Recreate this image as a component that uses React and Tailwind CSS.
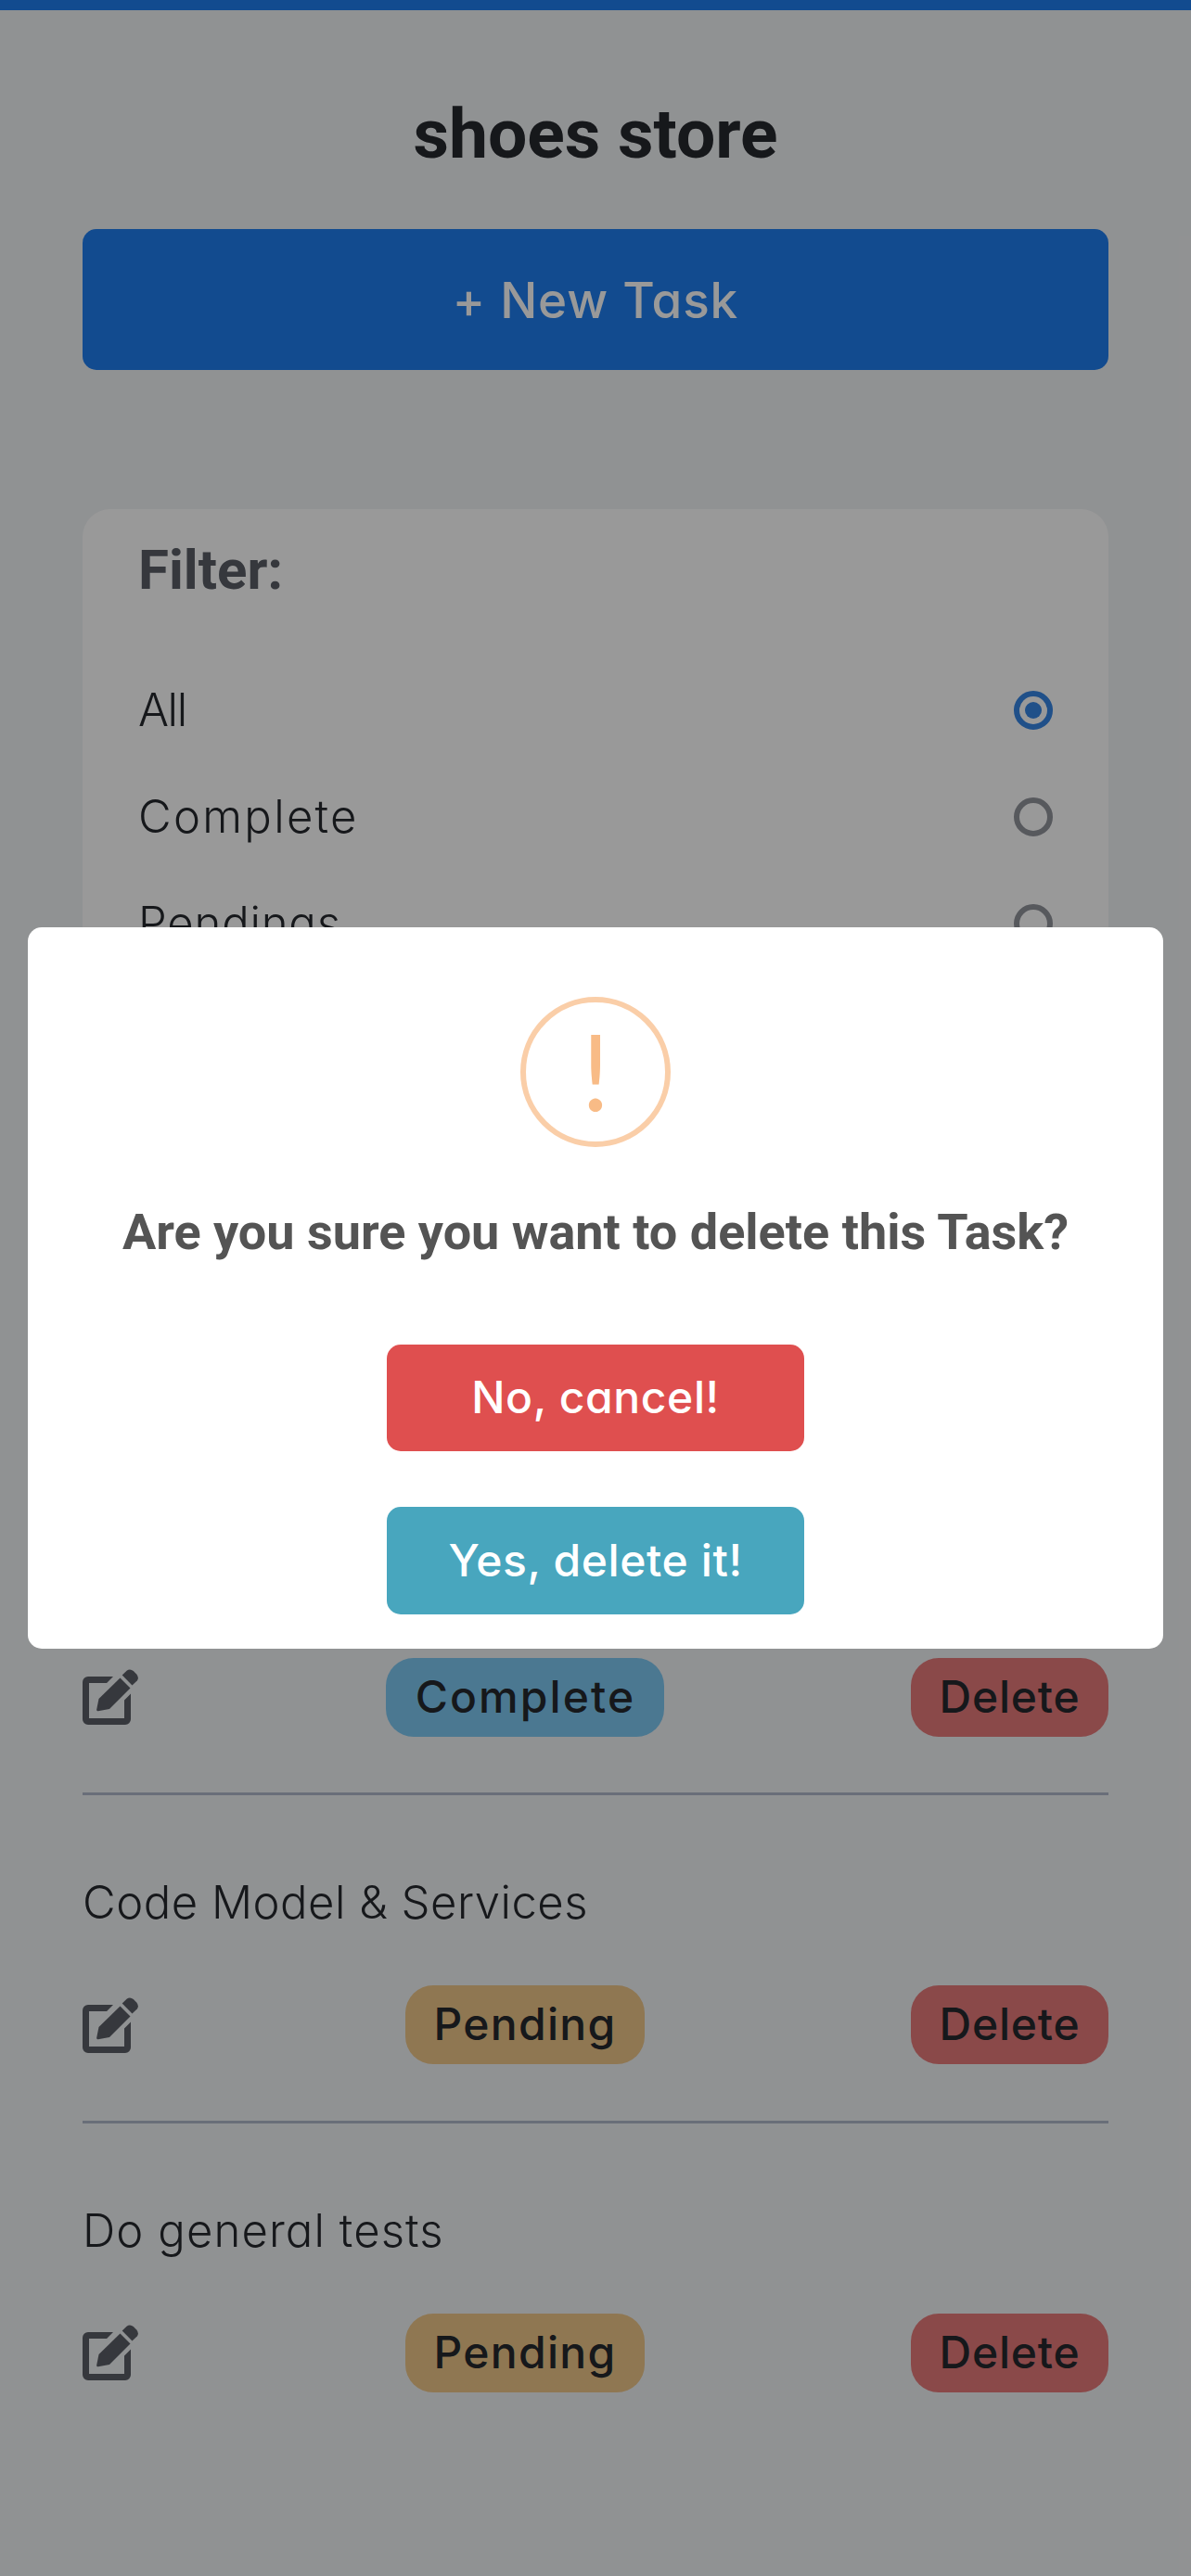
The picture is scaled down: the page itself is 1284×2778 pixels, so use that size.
import React from "react";

const filters = [
  { label: "All", checked: true, text: "tracking-[-1.4px]" },
  { label: "Complete", checked: false, text: "tracking-[2.3px]" },
  { label: "Pendings", checked: false, text: "tracking-[0.8px]" },
];

const tasks = [
  { name: "", status: "Complete" },
  { name: "Code Model & Services", status: "Pending", text: "tracking-[0.5px]" },
  { name: "Do general tests", status: "Pending", text: "tracking-[1.1px]" },
];

function EditIcon() {
  return (
    <svg viewBox="0 0 60 60" className="h-[60px] w-[60px] fill-[#5a5e66]">
      <path d="M33 8H6a6 6 0 0 0-6 6v40a6 6 0 0 0 6 6h40a6 6 0 0 0 6-6V26.5l-7 7V53H7V15h19z" />
      <path d="M40.5 9.5l11 11L29 43l-12.3 2.3q-1.7.3-1.5-1.7L17.5 32z" />
      <path d="M42.7 6.6L47.6 1.8Q51-.9 54.8 2L58 5.2Q61.4 9 58.8 12.6L53.5 17.6z" />
    </svg>
  );
}

function Radio({ checked }) {
  return checked ? (
    <span className="flex h-[42px] w-[42px] items-center justify-center rounded-full border-[6px] border-[#3685e4]">
      <span className="h-[18px] w-[18px] rounded-full bg-[#3685e4]" />
    </span>
  ) : (
    <span className="h-[42px] w-[42px] rounded-full border-[6px] border-[#92949c]" />
  );
}

function Task({ task, last }) {
  const complete = task.status === "Complete";
  return (
    <li className={last ? "pt-[80px]" : "border-b-[3px] border-[#afb7ca] pt-[80px] pb-[60.5px]"}>
      <p className={`h-[72px] text-[49px] leading-[72px] font-light whitespace-nowrap ${task.text || ""}`}>
        {task.name}
      </p>
      <div className="mt-[53px] flex h-[85px] items-center justify-between">
        <EditIcon />
        <span
          className={
            complete
              ? "flex h-[85px] w-[300px] items-center justify-center rounded-[30px] bg-[#7dc8f2] pb-px pl-[2px] tracking-[2.1px]"
              : "flex h-[85px] w-[258px] items-center justify-center rounded-[30px] bg-[#eec689] pb-px pl-[1px] tracking-[1.3px]"
          }
        >
          {task.status}
        </span>
        <span className="flex h-[85px] w-[213px] items-center justify-center rounded-[30px] bg-[#e67a7b] pb-px tracking-[0.8px]">
          Delete
        </span>
      </div>
    </li>
  );
}

export default function App() {
  return (
    <div className="relative h-[2778px] w-[1284px] overflow-hidden bg-[#f1f3f5] font-['Inter',sans-serif] text-[48px] leading-none font-medium text-[#26282e] [font-feature-settings:'cv11']">
      <div className="h-[11px] bg-[#1e7dee]" />
      <main className="px-[89px] pt-[93px]">
        <h1 className="text-center font-['Roboto',sans-serif] text-[75px] leading-[80px] font-bold">
          shoes store
        </h1>
        <button className="mt-[63px] flex h-[152px] w-full items-center justify-center rounded-[15px] bg-[#1e7dee] pt-[2px] text-[53px] tracking-[0.9px] text-white">
          + New Task
        </button>

        <section className="mt-[150px] h-[880px] rounded-[30px] bg-white px-[60px] pt-[30px]">
          <h2 className="font-['Roboto',sans-serif] text-[60px] leading-[72px] font-bold text-[#5a5e66]">
            Filter:
          </h2>
          <div className="mt-[57px]">
            {filters.map((f) => (
              <label key={f.label} className="flex h-[115px] items-center justify-between">
                <span className={`text-[49px] font-light ${f.text}`}>{f.label}</span>
                <Radio checked={f.checked} />
              </label>
            ))}
          </div>
        </section>

        <ul className="mt-[153.5px]">
          {tasks.map((t, i) => (
            <Task key={i} task={t} last={i === tasks.length - 1} />
          ))}
        </ul>
      </main>

      <div className="absolute inset-0 flex items-center justify-center bg-black/40">
        <div className="flex h-[778px] w-[1224px] flex-col items-center rounded-[15px] bg-white pt-[75px]">
          <div className="flex h-[162px] w-[162px] items-center justify-center rounded-full border-[6px] border-[#facea8] pb-[4px]">
            <span className="font-['Lato',sans-serif] text-[114px] leading-[146px] font-normal text-[#f8bb86]">
              !
            </span>
          </div>
          <h2 className="mt-[60px] font-['Roboto',sans-serif] text-[54px] leading-[64px] font-bold whitespace-nowrap text-[#545454]">
            Are you sure you want to delete this Task?
          </h2>
          <button className="mt-[89px] flex h-[115px] w-[450px] items-center justify-center rounded-[15px] bg-[#df4f4f] pb-[2px] tracking-[0.6px] text-white">
            No, cancel!
          </button>
          <button className="mt-[60px] flex h-[116px] w-[450px] items-center justify-center rounded-[15px] bg-[#48a6be] pb-[1px] tracking-[0.6px] text-white">
            Yes, delete it!
          </button>
        </div>
      </div>
    </div>
  );
}
